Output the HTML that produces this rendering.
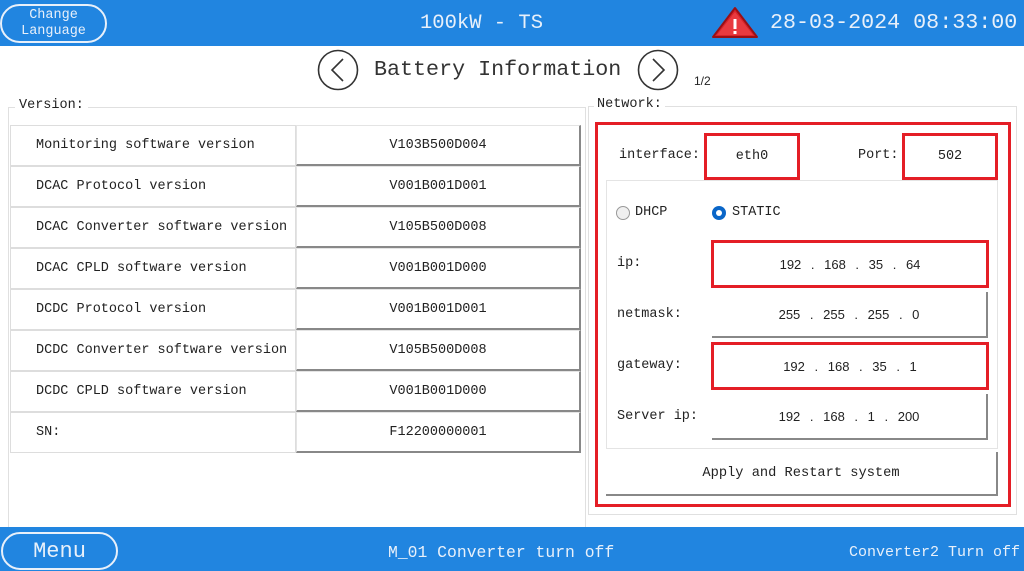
<!DOCTYPE html>
<html><head><meta charset="utf-8"><style>
*{box-sizing:border-box;margin:0;padding:0}
body{width:1024px;height:571px;position:relative;background:#fff;font-family:"Liberation Mono",monospace;color:#222;overflow:hidden}
.a{position:absolute}
.bar{background:#2185e0;color:#e8f0fa;left:0;width:1024px}
.cell{position:absolute;border:1px solid #ddd;font-size:13.5px;display:flex;align-items:center}
.l{left:10px;width:286px;padding-left:25px;background:#fff;white-space:nowrap}
.r{left:296px;width:285px;justify-content:center;border-right:2px solid #888;border-bottom:2px solid #888;border-top:1px solid #e4e4e4;border-left:1px solid #e4e4e4}
.red{position:absolute;border:3px solid #e41e26}
.fld{position:absolute;left:712px;width:276px;height:46px;display:flex;align-items:center;justify-content:center;font-family:"Liberation Sans",sans-serif;font-size:13px;border-right:2px solid #888;border-bottom:2px solid #888;word-spacing:6px}
.lab{position:absolute;left:617px;font-size:13.5px}
</style></head><body>
<div class="a bar" style="top:0;height:46px"></div>
<div class="a" style="left:0;top:4px;width:107px;height:39px;border:2px solid #e8f0fa;border-radius:20px;color:#e8f0fa;font-size:13.5px;text-align:center;line-height:16px;padding-top:2px">Change<br>Language</div>
<div class="a" style="left:420px;top:12px;font-size:20.5px;color:#e8f0fa">100kW - TS</div>
<svg class="a" style="left:711px;top:6px" width="48" height="34" viewBox="0 0 48 34"><path d="M24 2 L46 31 L2 31 Z" fill="#d8232a" stroke="#9a1015" stroke-width="2" stroke-linejoin="round"/><path d="M24 6 L42 29 L6 29 Z" fill="#e83a3f"/><rect x="22.5" y="13" width="3" height="10" fill="#fff"/><rect x="22.5" y="25" width="3" height="3" fill="#fff"/></svg>
<div class="a" style="left:770px;top:10px;font-size:21.7px;color:#e8f0fa">28-03-2024 08:33:00</div>

<svg class="a" style="left:317px;top:49px" width="42" height="42"><circle cx="21" cy="21" r="19.5" fill="none" stroke="#333" stroke-width="1.6"/><path d="M26 10 L15 21 L26 32" fill="none" stroke="#333" stroke-width="1.6"/></svg>
<div class="a" style="left:374px;top:57px;font-size:21.7px;color:#333">Battery Information</div>
<svg class="a" style="left:637px;top:49px" width="42" height="42"><circle cx="21" cy="21" r="19.5" fill="none" stroke="#333" stroke-width="1.6"/><path d="M16 10 L27 21 L16 32" fill="none" stroke="#333" stroke-width="1.6"/></svg>
<div class="a" style="left:694px;top:74px;font-size:12px;font-family:'Liberation Sans',sans-serif">1/2</div>

<div class="a" style="left:8px;top:107px;width:578px;height:420px;border:1px solid #e0e0e0;border-bottom:none"></div>
<div class="a" style="left:15px;top:98px;font-size:13.5px;background:#fff;padding:0 4px">Version:</div>

<div class="cell l" style="top:125px;height:41px">Monitoring software version</div><div class="cell r" style="top:125px;height:41px">V103B500D004</div>
<div class="cell l" style="top:166px;height:41px">DCAC Protocol version</div><div class="cell r" style="top:166px;height:41px">V001B001D001</div>
<div class="cell l" style="top:207px;height:41px">DCAC Converter software version</div><div class="cell r" style="top:207px;height:41px">V105B500D008</div>
<div class="cell l" style="top:248px;height:41px">DCAC CPLD software version</div><div class="cell r" style="top:248px;height:41px">V001B001D000</div>
<div class="cell l" style="top:289px;height:41px">DCDC Protocol version</div><div class="cell r" style="top:289px;height:41px">V001B001D001</div>
<div class="cell l" style="top:330px;height:41px">DCDC Converter software version</div><div class="cell r" style="top:330px;height:41px">V105B500D008</div>
<div class="cell l" style="top:371px;height:41px">DCDC CPLD software version</div><div class="cell r" style="top:371px;height:41px">V001B001D000</div>
<div class="cell l" style="top:412px;height:41px">SN:</div><div class="cell r" style="top:412px;height:41px">F12200000001</div>

<div class="a" style="left:588px;top:106px;width:429px;height:409px;border:1px solid #e0e0e0"></div>
<div class="a" style="left:594px;top:97px;font-size:13.5px;background:#fff;padding:0 3px">Network:</div>
<div class="red" style="left:595px;top:122px;width:416px;height:385px"></div>
<div class="a" style="left:619px;top:148px;font-size:13.5px">interface:</div>
<div class="red" style="left:704px;top:133px;width:96px;height:47px;display:flex;align-items:center;justify-content:center;font-size:13.5px">eth0</div>
<div class="a" style="left:858px;top:148px;font-size:13.5px">Port:</div>
<div class="red" style="left:902px;top:133px;width:96px;height:47px;display:flex;align-items:center;justify-content:center;font-size:13.5px">502</div>

<div class="a" style="left:606px;top:180px;width:392px;height:269px;border:1px solid #e4e4e4"></div>
<div class="a" style="left:616px;top:206px;width:14px;height:14px;border-radius:50%;border:1px solid #999;background:#f0f0f0"></div>
<div class="a" style="left:635px;top:205px;font-size:13.5px">DHCP</div>
<div class="a" style="left:712px;top:206px;width:14px;height:14px;border-radius:50%;background:#0a66c8"><div class="a" style="left:4px;top:4px;width:6px;height:6px;border-radius:50%;background:#fff"></div></div>
<div class="a" style="left:732px;top:205px;font-size:13.5px">STATIC</div>

<div class="lab" style="top:256px">ip:</div>
<div class="fld" style="top:241px;border:none"> 192 . 168 . 35 . 64</div>
<div class="red" style="left:711px;top:240px;width:278px;height:48px"></div>
<div class="lab" style="top:307px">netmask:</div>
<div class="fld" style="top:292px">255 . 255 . 255 . 0</div>
<div class="lab" style="top:358px">gateway:</div>
<div class="fld" style="top:343px;border:none">192 . 168 . 35 . 1</div>
<div class="red" style="left:711px;top:342px;width:278px;height:48px"></div>
<div class="lab" style="top:409px">Server ip:</div>
<div class="fld" style="top:394px">192 . 168 . 1 . 200</div>

<div class="a" style="left:606px;top:452px;width:392px;height:44px;border-right:2px solid #888;border-bottom:2px solid #888;display:flex;align-items:center;justify-content:center;font-size:13.7px">Apply and Restart system</div>

<div class="a bar" style="top:527px;height:44px"></div>
<div class="a" style="left:1px;top:532px;width:117px;height:38px;border:2px solid #e8f0fa;border-radius:19px;color:#e8f0fa;font-size:22px;display:flex;align-items:center;justify-content:center">Menu</div>
<div class="a" style="left:388px;top:543px;font-size:16.4px;color:#e8f0fa">M_01 Converter turn off</div>
<div class="a" style="left:849px;top:544px;font-size:15px;color:#e8f0fa">Converter2 Turn off</div>
</body></html>
